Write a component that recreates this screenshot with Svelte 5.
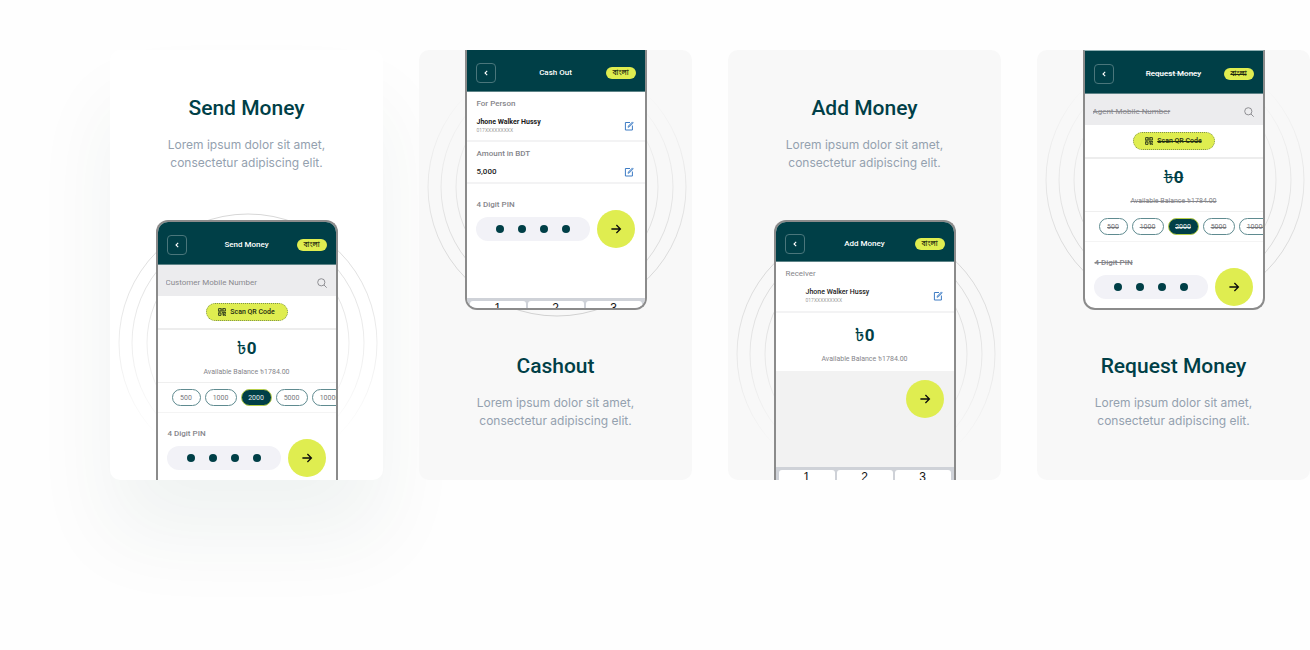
<script>
  const blurb = 'Lorem ipsum dolor sit amet, consectetur adipiscing elit.';
  const amounts = ['500', '1000', '2000', '5000', '10000'];

  const cards = [
    { id: 'send', title: 'Send Money', screenTitle: 'Send Money', kind: 'transfer', field: 'Customer Mobile Number', side: 'bottom', active: true },
    { id: 'cashout', title: 'Cashout', screenTitle: 'Cash Out', kind: 'cashout', side: 'top' },
    { id: 'add', title: 'Add Money', screenTitle: 'Add Money', kind: 'add', side: 'bottom' },
    { id: 'request', title: 'Request Money', screenTitle: 'Request Money', kind: 'transfer', field: 'Agent Mobile Number', side: 'top', struck: true }
  ];
</script>

{#snippet editIcon()}
  <button class="edit" aria-label="Edit">
    <svg viewBox="0 0 10 10" width="10" height="10" fill="none" stroke="#3e7cc4">
      <path d="M6 1.5H1.4V9H8.4V4.5" stroke-width="1" />
      <path d="M4 6.4L4.3 5L8.4 .9L9.3 1.8L5.3 5.9Z" stroke-width=".7" fill="#8fb3dd" />
    </svg>
  </button>
{/snippet}

{#snippet nextButton()}
  <button class="next" aria-label="Continue">
    <svg viewBox="0 0 12 12" width="12" height="12" fill="none" stroke="#0b0b0b" stroke-width="1.3">
      <path d="M1.4 6H10.2M6.4 2L10.4 6L6.4 10" />
    </svg>
  </button>
{/snippet}

{#snippet pin(id)}
  <div class="pin">
    <label for="{id}-pin">4 Digit PIN</label>
    <div class="pin-row">
      <div class="pin-field">
        <input id="{id}-pin" type="password" value="1234" maxlength="4" />
        <span class="dots" aria-hidden="true"><i></i><i></i><i></i><i></i></span>
      </div>
      {@render nextButton()}
    </div>
  </div>
{/snippet}

{#snippet balance()}
  <div class="balance">
    <strong><span class="taka">৳</span>0</strong>
    <small>Available Balance ৳1784.00</small>
  </div>
{/snippet}

{#snippet keypad()}
  <div class="keypad">
    <button>1</button><button>2</button><button>3</button>
  </div>
{/snippet}

{#snippet person()}
  <div class="person-row">
    <p><b>Jhone Walker Hussy</b><span>017XXXXXXXXX</span></p>
    {@render editIcon()}
  </div>
{/snippet}

<main>
  {#each cards as card (card.id)}
    <article class="card {card.side} {card.id}" class:active={card.active}>
      <svg class="rings" viewBox="0 0 260 260" fill="none" aria-hidden="true">
        <defs>
          <linearGradient id="fade-{card.id}" gradientUnits="userSpaceOnUse" x1="0" x2="0"
            y1={card.side === 'bottom' ? 0 : 260} y2={card.side === 'bottom' ? 230 : 30}>
            <stop offset="0" stop-color="#000" stop-opacity=".16" />
            <stop offset=".5" stop-color="#000" stop-opacity=".08" />
            <stop offset="1" stop-color="#000" stop-opacity="0" />
          </linearGradient>
        </defs>
        <g stroke="url(#fade-{card.id})">
          <circle cx="130" cy="130" r="129" />
          <circle cx="130" cy="130" r="116" />
          <circle cx="130" cy="130" r="101" />
        </g>
      </svg>

      <div class="copy">
        <h2>{card.title}</h2>
        <p>{blurb}</p>
      </div>

      <div class="phone {card.kind}" class:struck={card.struck}>
        <header>
          <button class="back" aria-label="Back">
            <svg viewBox="0 0 6 8" width="6" height="8" fill="none" stroke="#fff" stroke-width="1.1"><path d="M4.2 1.8L2 4L4.2 6.2" /></svg>
          </button>
          <h3>{card.screenTitle}</h3>
          <button class="lang" lang="bn">বাংলা</button>
        </header>

        {#if card.kind === 'transfer'}
          <div class="search">
            <input id="{card.id}-number" type="text" placeholder={card.field} aria-label={card.field} />
            <svg viewBox="0 0 10 10" width="10" height="10" fill="none" stroke="#86868a" stroke-width=".9">
              <circle cx="4.3" cy="4.3" r="3.6" /><path d="M7 7L9.7 9.7" />
            </svg>
          </div>
          <div class="scan-row">
            <button class="scan">
              <svg viewBox="0 0 8 8" width="8" height="8" fill="none" stroke="#26331a" stroke-width=".9">
                <path d="M.6 .6H3V3H.6ZM5 .6H7.4V3H5ZM.6 5H3V7.4H.6ZM4 0V4.4H8M4.4 5.4H5.8V8M6.6 5.2H8M7.4 6.4V8M0 4H2.6M4.4 6.8H7" />
              </svg>
              <span>Scan QR Code</span>
            </button>
          </div>
          {@render balance()}
          <div class="chips">
            {#each amounts as amount}
              <button class:selected={amount === '2000'}>{amount}</button>
            {/each}
          </div>
          {@render pin(card.id)}
        {:else if card.kind === 'cashout'}
          <section>
            <h4>For Person</h4>
            {@render person()}
          </section>
          <section>
            <h4>Amount in BDT</h4>
            <div class="person-row amount">
              <p>5,000</p>
              {@render editIcon()}
            </div>
          </section>
          {@render pin(card.id)}
          {@render keypad()}
        {:else}
          <section class="receiver">
            <h4>Receiver</h4>
            {@render person()}
          </section>
          {@render balance()}
          <div class="proceed">{@render nextButton()}</div>
          {@render keypad()}
        {/if}
      </div>
    </article>
  {/each}
</main>

<style>
  :global(body) { margin: 0; background: #fefefe; }

  main {
    display: grid;
    grid-template-columns: repeat(4, minmax(0, 1fr));
    gap: 36px;
    padding: 50px 0 170px 110px;
    font-family: Roboto, "Noto Sans Bengali", sans-serif;
    color: #003f47;
  }
  h2, h3, h4, p { margin: 0; }
  button, input { font: inherit; border: 0; padding: 0; margin: 0; box-sizing: border-box; }
  button { display: flex; align-items: center; justify-content: center; background: none; flex: none; cursor: pointer; }
  svg { display: block; flex: none; }

  .card {
    position: relative;
    display: flex;
    flex-direction: column;
    align-items: center;
    background: #f8f8f8;
    border-radius: 10px;
    overflow: hidden;
  }
  .card.top { flex-direction: column-reverse; }
  .card.active { background: #fff; box-shadow: 0 56px 84px rgba(0, 64, 56, .06); }

  .copy { box-sizing: border-box; height: 170px; padding: 44px 40px 0; text-align: center; }
  .top .copy { padding-top: 42px; }
  h2 { font-size: 21px; font-weight: 500; line-height: 28px; }
  .copy p { max-width: 180px; margin: 14px auto 0; font-family: Inter, Roboto, sans-serif; font-size: 12px; line-height: 18px; color: #94a1af; }

  .rings { position: absolute; width: 260px; left: calc(50% - 129px); top: 163px; }
  .add .rings { top: 174px; }
  .cashout .rings { top: 7px; }
  .request .rings { top: 0; }

  .phone {
    position: relative;
    box-sizing: border-box;
    display: flex;
    flex-direction: column;
    width: 182px;
    height: 260px;
    overflow: hidden;
    background: #fff;
    border: 2px solid #8b8b8b;
    font-size: 8px;
    line-height: 10px;
    color: #85858a;
  }
  .bottom .phone { border-bottom: 0; border-radius: 12px 12px 0 0; }
  .top .phone { border-top: 0; border-radius: 0 0 12px 12px; }
  .request .phone { border-top: 1px solid #8fb0b3; }

  header {
    box-sizing: border-box;
    display: grid;
    grid-template-columns: 30px 1fr 30px;
    align-items: center;
    flex: none;
    height: 43px;
    padding: 4px 9px 0;
    background: #003f47;
    border-bottom: 1px solid #5d8387;
    color: #fff;
  }
  .phone.cashout header { height: 42px; padding-top: 5px; }
  .phone.add header { height: 40px; }
  h3 { font-size: 8px; font-weight: 500; text-align: center; }
  .back { width: 20px; height: 20px; border: 1px solid #4a767b; border-radius: 4px; }
  .lang { width: 30px; height: 12px; border-radius: 6px; background: #dfed50; color: #1d2a10; font-size: 7px; font-weight: 500; line-height: 10px; }

  .search {
    box-sizing: border-box;
    display: flex;
    align-items: center;
    flex: none;
    height: 31px;
    padding: 4px 9px 0 8px;
    background: #ececee;
  }
  .search input { flex: 1; min-width: 0; height: 16px; background: none; outline: 0; }
  .search input::placeholder { color: #8a8a8f; opacity: 1; }

  .scan-row { display: flex; justify-content: center; align-items: center; flex: none; height: 32px; border-bottom: 2px solid #ededed; }
  .scan { gap: 4px; width: 82px; height: 18px; border: 1px dotted #7d9150; border-radius: 9px; background: #dfed50; color: #1d2a10; font-size: 7px; font-weight: 500; }

  .balance { display: flex; flex-direction: column; align-items: center; flex: none; height: 52px; border-bottom: 1px solid #efefef; }
  .balance strong { font-size: 17px; font-weight: 700; line-height: 36px; color: #003f47; }
  .taka { font-weight: 400; }
  .balance small { font-size: 7px; line-height: 12px; }
  .phone.add .balance { height: 54px; padding-top: 4px; border: 0; }

  .chips { display: flex; align-items: center; gap: 4px; flex: none; height: 29px; padding-left: 14px; border-bottom: 1px solid #f4f4f4; }
  .chips button { width: 32px; height: 17px; border: 1px solid #5f8b90; border-radius: 9px; background: #fff; color: #77777c; font-size: 7px; }
  .chips button:first-child { width: 29px; }
  .chips button:last-child { width: 36px; }
  .chips .selected { width: 31px; background: #003f47; border-color: #b8cf4a; color: #e8eeee; }

  .pin { padding: 16px 10px 0 9px; flex: none; }
  .pin label { display: block; font-weight: 500; padding-left: 1px; }
  .pin-row { display: flex; align-items: center; gap: 7px; }
  .pin-field { position: relative; flex: 1; min-width: 0; height: 24px; }
  .pin-field input { width: 100%; height: 24px; border-radius: 12px; background: #f2f2f7; color: transparent; outline: 0; text-align: center; }
  .dots { position: absolute; inset: 0; display: flex; align-items: center; justify-content: center; gap: 14px; pointer-events: none; }
  .dots i { width: 8px; height: 8px; border-radius: 50%; background: #003f47; }
  .next { width: 38px; height: 38px; border-radius: 50%; background: #dfed50; }

  section { flex: none; box-sizing: border-box; padding: 7px 11px 0 10px; border-bottom: 2px solid #f3f3f4; height: 50px; }
  section + section { height: 42px; }
  h4 { font-size: 8px; font-weight: 400; }
  .phone.cashout h4 { font-weight: 500; }
  .person-row { display: flex; align-items: center; justify-content: space-between; margin-top: 8px; color: #1b1b1b; }
  .person-row b { display: block; font-size: 7px; font-weight: 500; }
  .phone.cashout b { font-weight: 700; }
  .person-row span { display: block; font-size: 5px; line-height: 7px; color: #a0a0a0; }
  .person-row.amount { font-weight: 500; }
  .receiver .person-row { padding-left: 20px; }
  .edit { width: 10px; height: 10px; }
  .receiver { height: 51px; }

  .proceed { flex: 1; display: flex; justify-content: flex-end; align-items: flex-start; padding: 9px 10px 0; background: #f2f2f2; }

  .keypad {
    display: grid;
    grid-template-columns: repeat(3, 1fr);
    gap: 2px;
    flex: none;
    box-sizing: border-box;
    height: 10px;
    margin-top: auto;
    padding: 3px 3px 0;
    overflow: hidden;
    background: #cfd2d8;
  }
  .phone.add .keypad { height: 13px; }
  .keypad button { height: 24px; align-items: flex-start; border-radius: 3px; background: #fff; color: #111; font: 12px/14px "Liberation Sans", Arial, sans-serif; }

  .struck .lang, .struck .scan span, .struck strong, .struck small,
  .struck .chips button, .struck label, .struck input::placeholder { text-decoration: line-through; }
  .struck h3 { text-decoration: line-through rgba(255, 255, 255, .4); }
</style>
